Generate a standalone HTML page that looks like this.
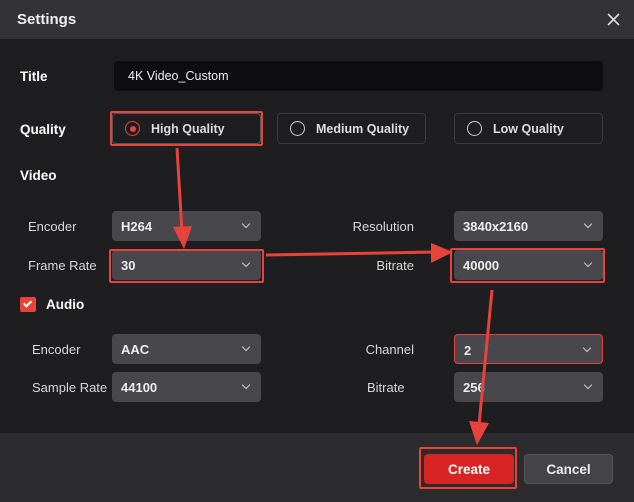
<!DOCTYPE html>
<html><head><style>
*{margin:0;padding:0;box-sizing:border-box}
body{width:634px;height:502px;background:#1e1e20;font-family:"Liberation Sans",sans-serif;position:relative;overflow:hidden;color:#e8e8e8}
.hdr{position:absolute;left:0;top:0;width:634px;height:39px;background:#333336}
.ftr{position:absolute;left:0;top:433px;width:634px;height:69px;background:#2c2c2e}
.a{position:absolute}
.lbl{position:absolute;font-size:13px;color:#d8d8d8}
.b{font-weight:bold;color:#fff;font-size:13.5px}
.sel{position:absolute;width:149px;height:30px;background:#48484c;border-radius:4px;font-size:13px;font-weight:bold;color:#eee;padding:8px 0 0 9px}
.sel:after{content:"";position:absolute;right:12px;top:10px;width:5px;height:5px;border-right:1.3px solid #ccc;border-bottom:1.3px solid #ccc;transform:rotate(45deg)}
.q{position:absolute;top:113px;width:149px;height:31px;border:1px solid #3c3c40;border-radius:4px;font-size:12.5px;font-weight:bold;color:#ddd;padding:8px 0 0 38px}
.q i{position:absolute;left:12px;top:7px;width:15px;height:15px;border:1.5px solid #ccc;border-radius:50%;display:flex;align-items:center;justify-content:center}
.red{position:absolute;border:2px solid #e8433b;border-radius:2px}
.r{text-align:right;width:120px}
</style></head><body>
<div class="hdr"></div>
<div class="lbl" style="left:17px;top:11px;font-size:15px;font-weight:bold;color:#eee">Settings</div>
<svg class="a" style="left:607px;top:13px" width="13" height="13"><path d="M1 1L12 12M12 1L1 12" stroke="#ddd" stroke-width="1.6"/></svg>

<div class="lbl b" style="left:20px;top:69px">Title</div>
<div class="a" style="left:114px;top:61px;width:489px;height:30px;background:#0e0e10;border-radius:4px;font-size:12.5px;color:#eee;padding:8px 0 0 14px">4K Video_Custom</div>

<div class="lbl b" style="left:20px;top:122px">Quality</div>
<div class="q" style="left:112px;border-color:#555"><i style="border-color:#e8433b"><b style="width:6px;height:6px;border-radius:50%;background:#e8433b"></b></i>High Quality</div>
<div class="q" style="left:277px"><i></i>Medium Quality</div>
<div class="q" style="left:454px"><i></i>Low Quality</div>
<div class="red" style="left:110px;top:111px;width:153px;height:35px"></div>

<div class="lbl b" style="left:20px;top:168px">Video</div>
<div class="lbl" style="left:28px;top:219px">Encoder</div>
<div class="lbl" style="left:28px;top:258px">Frame Rate</div>
<div class="sel" style="left:112px;top:211px">H264</div>
<div class="sel" style="left:112px;top:250px">30</div>
<div class="red" style="left:109px;top:249px;width:155px;height:34px"></div>
<div class="lbl r" style="left:294px;top:219px">Resolution</div>
<div class="lbl r" style="left:294px;top:258px">Bitrate</div>
<div class="sel" style="left:454px;top:211px">3840x2160</div>
<div class="sel" style="left:454px;top:250px">40000</div>
<div class="red" style="left:450px;top:248px;width:155px;height:35px"></div>

<div class="a" style="left:20px;top:297px;width:16px;height:15px;background:#e8433b;border-radius:2px"></div>
<div class="a" style="left:25px;top:299px;width:5px;height:8px;border-right:2px solid #fff;border-bottom:2px solid #fff;transform:rotate(45deg)"></div>
<div class="lbl b" style="left:46px;top:297px">Audio</div>

<div class="lbl" style="left:32px;top:342px">Encoder</div>
<div class="lbl" style="left:32px;top:380px">Sample Rate</div>
<div class="sel" style="left:112px;top:334px">AAC</div>
<div class="sel" style="left:112px;top:372px">44100</div>
<div class="lbl r" style="left:294px;top:342px">Channel</div>
<div class="lbl" style="left:367px;top:380px">Bitrate</div>
<div class="sel" style="left:454px;top:334px;border:1px solid #e8433b">2</div>
<div class="sel" style="left:454px;top:372px">256</div>

<div class="ftr"></div>
<div class="a" style="left:424px;top:454px;width:90px;height:30px;background:#d92424;border-radius:4px;color:#fff;font-size:13.5px;font-weight:bold;text-align:center;padding-top:8px">Create</div>
<div class="red" style="left:419px;top:447px;width:98px;height:42px"></div>
<div class="a" style="left:524px;top:454px;width:89px;height:30px;background:#444448;border:1px solid #555;border-radius:4px;color:#eee;font-size:13.5px;font-weight:bold;text-align:center;padding-top:7px">Cancel</div>

<svg class="a" style="left:0;top:0" width="634" height="502">
<g fill="#e8433b" stroke="#e8433b">
<line x1="177" y1="148" x2="182" y2="232" stroke-width="3"/>
<polygon points="173,227 192,226 184,249" stroke="none"/>
<line x1="266" y1="255" x2="435" y2="252" stroke-width="3"/>
<polygon points="431,243 453,252 431,263" stroke="none"/>
<line x1="492" y1="290" x2="479" y2="425" stroke-width="3"/>
<polygon points="469,421 489,423 477,445" stroke="none"/>
</g>
</svg>
</body></html>
